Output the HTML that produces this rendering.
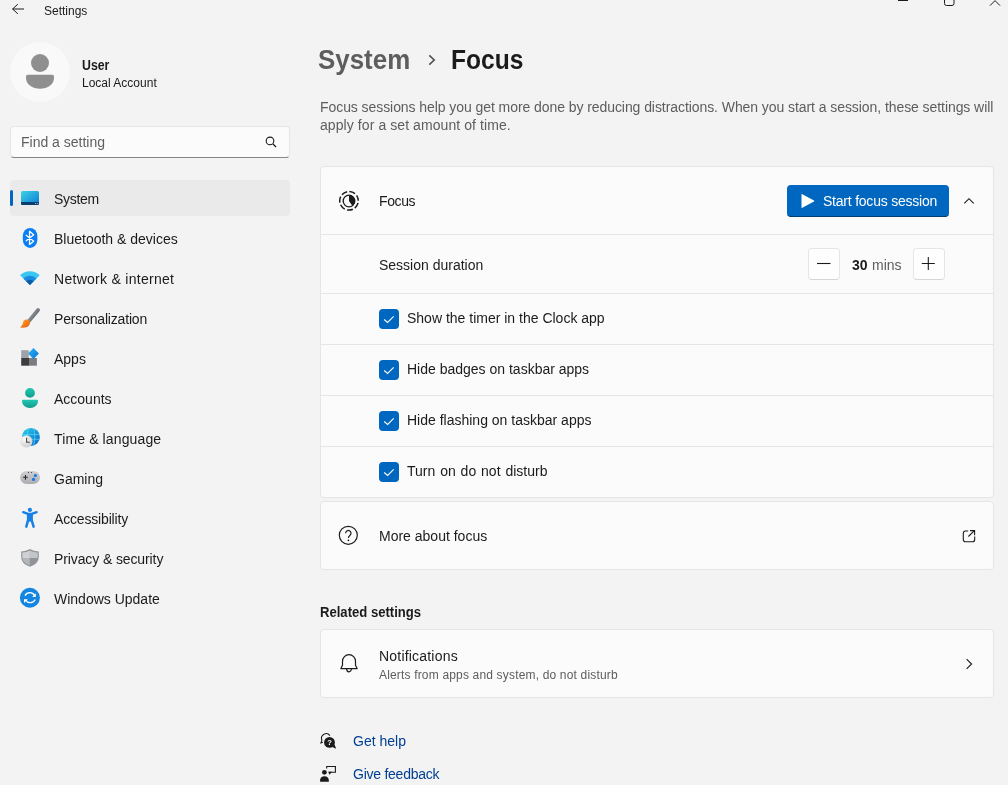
<!DOCTYPE html>
<html><head><meta charset="utf-8">
<style>
*{margin:0;padding:0;box-sizing:border-box}
html,body{width:1008px;height:785px;overflow:hidden;background:#f3f3f3;font-family:"Liberation Sans",sans-serif;color:#1b1b1b}
.a{position:absolute}
.t{position:absolute;white-space:nowrap;line-height:1;font-size:14px}
.card{position:absolute;left:320px;width:674px;background:#fbfbfb;border:1px solid #e5e5e5;border-radius:4px}
.sep{position:absolute;left:321px;width:672px;height:1px;background:#e5e5e5}
.nav{position:absolute;left:54px;font-size:14px;line-height:1;white-space:nowrap}
.ico{position:absolute}
.cb{position:absolute;left:379px;width:20px;height:20px;border-radius:4px;background:#0067c0}
</style></head><body>
<div id="root" style="position:absolute;left:0;top:0;width:1008px;height:785px;will-change:transform;background:#f3f3f3">

<!-- title bar -->
<svg class="a" style="left:0;top:0" width="30" height="20" viewBox="0 0 30 20"><path d="M12.5 9H24M17.8 4.2L12.6 9l5.2 4.8" fill="none" stroke="#1b1b1b" stroke-width="1"/></svg>
<div class="t" style="left:44px;top:5px;font-size:12px">Settings</div>
<svg class="a" style="left:890px;top:0" width="118" height="10" viewBox="0 0 118 10"><path d="M8 0.5H18" stroke="#1b1b1b" stroke-width="1"/><path d="M54.5 -4V3.5a2 2 0 0 0 2 2h5.5a2 2 0 0 0 2-2V-4" fill="none" stroke="#1b1b1b" stroke-width="1"/><path d="M100 5.6L105 0.6L110 5.6" fill="none" stroke="#1b1b1b" stroke-width="1"/></svg>

<!-- user -->
<div class="a" style="left:10px;top:42px;width:60px;height:60px;border-radius:50%;background:#f9f9f9"></div>
<svg class="a" style="left:10px;top:42px" width="60" height="60" viewBox="0 0 60 60"><circle cx="30" cy="21" r="9" fill="#8f8f8f"/><path d="M16 34.6A1.9 1.9 0 0 1 17.9 32.7H42.1A1.9 1.9 0 0 1 44 34.6V36C44 42.5 37.5 46.8 30 46.8S16 42.5 16 36z" fill="#8f8f8f"/></svg>
<div class="t" style="left:82px;top:58px;font-weight:bold;transform:scaleX(0.88);transform-origin:0 0">User</div>
<div class="t" style="left:82px;top:77px;font-size:12px">Local Account</div>

<!-- search -->
<div class="a" style="left:10px;top:126px;width:280px;height:32px;background:#fbfbfb;border:1px solid #e5e5e5;border-bottom:1px solid #868686;border-radius:4px"></div>
<div class="t" style="left:21px;top:135px;color:#5f5f5f">Find a setting</div>
<svg class="a" style="left:262px;top:133px" width="18" height="18" viewBox="0 0 18 18"><circle cx="8" cy="7.9" r="3.8" fill="none" stroke="#1b1b1b" stroke-width="1.1"/><path d="M11 11l3 3" stroke="#1b1b1b" stroke-width="1.2"/></svg>

<!-- nav -->
<div class="a" style="left:10px;top:180px;width:280px;height:36px;border-radius:4px;background:#eaeaea"></div>
<div class="a" style="left:10px;top:190px;width:3px;height:16px;border-radius:2px;background:#0067c0"></div>

<svg class="a" style="left:16px;top:184px" width="28" height="28" viewBox="0 0 28 28">
<defs><linearGradient id="gsys" x1="0" y1="0" x2="1" y2="1"><stop offset="0" stop-color="#3bd4e6"/><stop offset="1" stop-color="#0b78d4"/></linearGradient></defs>
<rect x="5" y="7" width="18" height="14" rx="1.6" fill="url(#gsys)"/>
<path d="M5 18H23V19.4A1.6 1.6 0 0 1 21.4 21H6.6A1.6 1.6 0 0 1 5 19.4z" fill="#0b3d6e"/>
<circle cx="19.6" cy="19.5" r="0.5" fill="#cfe6f5"/><circle cx="21.7" cy="19.5" r="0.5" fill="#cfe6f5"/>
</svg>
<svg class="a" style="left:16px;top:225px" width="28" height="28" viewBox="0 0 28 28">
<rect x="6.8" y="2.9" width="14.6" height="20" rx="7.3" ry="8.2" fill="#0a7ff5"/>
<path d="M10.2 10.3L17.7 16.3L13.55 19.4V6.2L17.7 9.7L10.2 15.7" fill="none" stroke="#fff" stroke-width="1.3" stroke-linejoin="round" stroke-linecap="round"/>
</svg>
<svg class="a" style="left:16px;top:265px" width="28" height="28" viewBox="0 0 28 28">
<path d="M4.1 10.3A14 14 0 0 1 23.7 10.3L13.9 20z" fill="#3ac6f2"/>
<path d="M7.3 13.4A9.5 9.5 0 0 1 20.5 13.4L13.9 20z" fill="#1a8ae0"/>
<path d="M10.2 16.3A5.3 5.3 0 0 1 17.6 16.3L13.9 20z" fill="#0c5aa6"/>
</svg>
<svg class="a" style="left:16px;top:305px" width="28" height="28" viewBox="0 0 28 28">
<defs><linearGradient id="gbr" x1="0" y1="0" x2="1" y2="1"><stop offset="0" stop-color="#ffb21a"/><stop offset="1" stop-color="#e8501a"/></linearGradient>
<linearGradient id="gbh" gradientUnits="userSpaceOnUse" x1="13" y1="8" x2="20" y2="13"><stop offset="0" stop-color="#a3a8ae"/><stop offset="1" stop-color="#5f646b"/></linearGradient></defs>
<path d="M22 5L12.6 16.4" stroke="url(#gbh)" stroke-width="3.8" stroke-linecap="round"/>
<path d="M9.6 14.6Q13.3 14 14 17.3Q14 21 10.3 22.3Q7 23.3 4.2 22.2Q6.6 20.6 6.9 18Q7.2 15.1 9.6 14.6z" fill="url(#gbr)"/>
</svg>
<svg class="a" style="left:16px;top:345px" width="28" height="28" viewBox="0 0 28 28">
<defs><linearGradient id="gap" x1="0" y1="0" x2="1" y2="1"><stop offset="0" stop-color="#28b8f5"/><stop offset="1" stop-color="#0a6fd8"/></linearGradient></defs>
<rect x="5.2" y="5.2" width="7.6" height="7.8" fill="#9ea3aa"/>
<rect x="5.2" y="13" width="7.8" height="7.7" fill="#3d3d3f"/>
<rect x="13" y="13" width="7.9" height="7.7" fill="#7b7c80"/>
<path d="M17.5 3.1L22.9 8.6L17.5 14L12.1 8.6z" fill="url(#gap)"/>
</svg>
<svg class="a" style="left:16px;top:385px" width="28" height="28" viewBox="0 0 28 28">
<defs><linearGradient id="gac" x1="0" y1="0" x2="0" y2="1"><stop offset="0" stop-color="#22c7b4"/><stop offset="1" stop-color="#0f9c8c"/></linearGradient></defs>
<circle cx="14" cy="7.9" r="4.9" fill="url(#gac)"/>
<path d="M6 16A1.2 1.2 0 0 1 7.2 14.8H20.8A1.2 1.2 0 0 1 22 16C22 20 18.5 22.9 14 22.9S6 20 6 16z" fill="url(#gac)"/>
</svg>
<svg class="a" style="left:16px;top:425px" width="28" height="28" viewBox="0 0 28 28">
<defs><linearGradient id="ggl" x1="0" y1="0" x2="1" y2="1"><stop offset="0" stop-color="#2ed0ea"/><stop offset="1" stop-color="#0a63c9"/></linearGradient>
<radialGradient id="gcl" cx="0.35" cy="0.3" r="0.8"><stop offset="0" stop-color="#fafafa"/><stop offset="1" stop-color="#c9c9c9"/></radialGradient></defs>
<circle cx="14.9" cy="11.9" r="9" fill="url(#ggl)"/>
<path d="M6 9.5H23.8M6.5 14.3H23.5M12 3.2Q10.5 12 12.3 20.8M18 3.2Q19.6 12 17.9 20.8" fill="none" stroke="#5fe0f5" stroke-width="0.8" opacity="0.8"/>
<circle cx="10.4" cy="16.4" r="6.1" fill="url(#gcl)"/>
<path d="M10.6 12.8V17.2H13.8" fill="none" stroke="#444" stroke-width="1.1"/>
</svg>
<svg class="a" style="left:16px;top:465px" width="28" height="28" viewBox="0 0 28 28">
<defs><linearGradient id="ggm" x1="0" y1="0" x2="0" y2="1"><stop offset="0" stop-color="#d0d0d3"/><stop offset="1" stop-color="#adadb2"/></linearGradient></defs>
<rect x="4.1" y="5.9" width="19.8" height="13" rx="6.5" fill="url(#ggm)"/>
<path d="M7.1 12.3H11.8M9.45 9.9V14.7" stroke="#2b2b2b" stroke-width="1.1"/>
<circle cx="19.4" cy="10.5" r="1.6" fill="#1479e6"/><circle cx="17.5" cy="14.4" r="1.6" fill="#1479e6"/>
<circle cx="12.5" cy="7.5" r="0.55" fill="#333"/><circle cx="15.5" cy="7.5" r="0.55" fill="#333"/>
</svg>
<svg class="a" style="left:16px;top:505px" width="28" height="28" viewBox="0 0 28 28">
<circle cx="13.9" cy="4.9" r="2.05" fill="#1580e8"/>
<path d="M7.2 7.2L12 8.9H15.8L20.6 7.2" fill="none" stroke="#1580e8" stroke-width="2.3" stroke-linecap="round" stroke-linejoin="round"/>
<rect x="10.9" y="8.8" width="6" height="7.8" fill="#1580e8"/>
<path d="M11.9 15.8L10.3 21.6M15.9 15.8L17.6 21.6" stroke="#1580e8" stroke-width="2.5" stroke-linecap="round"/>
</svg>
<svg class="a" style="left:16px;top:545px" width="28" height="28" viewBox="0 0 28 28">
<defs><clipPath id="csh"><path d="M6.3 7.4Q10.5 7.4 13.9 5.4Q17.3 7.4 21.7 7.4V12Q21.7 18 13.9 20.6Q6.3 18 6.3 12z"/></clipPath></defs>
<path d="M5.2 6.4Q10 6.5 13.9 4.1Q17.8 6.5 22.8 6.4V12Q22.8 18.8 13.9 21.8Q5.2 18.8 5.2 12z" fill="#909398"/>
<g clip-path="url(#csh)"><rect x="0" y="0" width="13.9" height="13" fill="#cfd1d4"/><rect x="13.9" y="0" width="14" height="13" fill="#c3c5c8"/><rect x="0" y="13" width="13.9" height="15" fill="#b3b5b8"/><rect x="13.9" y="13" width="14" height="15" fill="#909398"/></g>
</svg>
<svg class="a" style="left:16px;top:585px" width="28" height="28" viewBox="0 0 28 28">
<circle cx="13.9" cy="12.7" r="10" fill="#1485e0"/>
<path d="M9 10.6A5.4 5.4 0 0 1 18.6 10.6" fill="none" stroke="#fff" stroke-width="1.3"/>
<path d="M19.8 8.2V11.9H16.1z" fill="#fff"/>
<path d="M19.2 14.5A5.5 5.5 0 0 1 9.6 15.2" fill="none" stroke="#fff" stroke-width="1.3"/>
<path d="M8 18V14.3H11.8z" fill="#fff"/>
</svg>

<div class="nav" style="top:192px;letter-spacing:-0.3px">System</div>
<div class="nav" style="top:232px">Bluetooth &amp; devices</div>
<div class="nav" style="top:272px;letter-spacing:0.28px">Network &amp; internet</div>
<div class="nav" style="top:312px;letter-spacing:-0.18px">Personalization</div>
<div class="nav" style="top:352px">Apps</div>
<div class="nav" style="top:392px">Accounts</div>
<div class="nav" style="top:432px;letter-spacing:0.13px">Time &amp; language</div>
<div class="nav" style="top:472px">Gaming</div>
<div class="nav" style="top:512px;letter-spacing:-0.17px">Accessibility</div>
<div class="nav" style="top:552px;letter-spacing:-0.11px">Privacy &amp; security</div>
<div class="nav" style="top:592px">Windows Update</div>

<!-- header -->
<div class="t" style="left:318px;top:47px;font-size:27px;font-weight:bold;transform:scaleX(0.96);transform-origin:0 0;color:#5d5d5d">System</div>
<svg class="a" style="left:424px;top:52px" width="14" height="16" viewBox="0 0 14 16"><path d="M5.3 3.3L10.2 8L5.3 12.7" fill="none" stroke="#505050" stroke-width="1.6"/></svg>
<div class="t" style="left:451px;top:47px;font-size:27px;font-weight:bold;transform:scaleX(0.91);transform-origin:0 0">Focus</div>
<div class="t" style="left:320px;top:100px;color:#5d5d5d;letter-spacing:-0.07px">Focus sessions help you get more done by reducing distractions. When you start a session, these settings will</div>
<div class="t" style="left:320px;top:118px;color:#5d5d5d;letter-spacing:0.08px">apply for a set amount of time.</div>

<!-- card 1 -->
<div class="card" style="top:166px;height:332px"></div>
<div class="sep" style="top:234px"></div>
<div class="sep" style="top:293px"></div>
<div class="sep" style="top:344px"></div>
<div class="sep" style="top:395px"></div>
<div class="sep" style="top:446px"></div>

<div class="t" style="left:379px;top:194px;letter-spacing:-0.4px">Focus</div>
<div class="t" style="left:379px;top:258px">Session duration</div>
<div class="t" style="left:407px;top:311px">Show the timer in the Clock app</div>
<div class="t" style="left:407px;top:362px">Hide badges on taskbar apps</div>
<div class="t" style="left:407px;top:413px">Hide flashing on taskbar apps</div>
<div class="t" style="left:407px;top:464px;word-spacing:1px">Turn on do not disturb</div>

<!-- card 2 -->
<div class="card" style="top:501px;height:69px"></div>
<div class="t" style="left:379px;top:529px">More about focus</div>

<div class="t" style="left:320px;top:605px;font-weight:bold;transform:scaleX(0.935);transform-origin:0 0">Related settings</div>

<!-- card 3 -->
<div class="card" style="top:629px;height:69px"></div>
<div class="t" style="left:379px;top:649px;letter-spacing:0.2px">Notifications</div>
<div class="t" style="left:379px;top:669px;font-size:12px;color:#5d5d5d;letter-spacing:0.17px">Alerts from apps and system, do not disturb</div>

<div class="t" style="left:353px;top:734px;color:#003e92">Get help</div>
<div class="t" style="left:353px;top:767px;color:#003e92;letter-spacing:-0.25px">Give feedback</div>


<!-- card1 widgets -->
<svg class="a" style="left:337px;top:189px" width="24" height="24" viewBox="0 0 24 24">
<circle cx="12" cy="11.8" r="9.3" fill="none" stroke="#1b1b1b" stroke-width="1.5" stroke-dasharray="6.05 2.3" stroke-dashoffset="-2.2"/>
<circle cx="12" cy="12" r="5.8" fill="none" stroke="#1b1b1b" stroke-width="1.3"/>
<path d="M12 6.2V12L15.3 16.8A5.8 5.8 0 0 0 12 6.2z" fill="#1b1b1b"/>
</svg>
<div class="a" style="left:787px;top:185px;width:162px;height:32px;border-radius:4px;background:#0067c0;border-bottom:1px solid #003e73"></div>
<svg class="a" style="left:798px;top:192px" width="20" height="18" viewBox="0 0 20 18"><path d="M3.5 2.6Q3.5 1.8 4.3 2.2L16 8.5Q16.6 9 16 9.5L4.3 15.8Q3.5 16.2 3.5 15.4z" fill="#fff"/></svg>
<div class="t" style="left:823px;top:194px;color:#fff;letter-spacing:-0.22px">Start focus session</div>
<svg class="a" style="left:960px;top:193px" width="18" height="14" viewBox="0 0 18 14"><path d="M4.3 10.4L9 5.7L13.7 10.4" fill="none" stroke="#1b1b1b" stroke-width="1.1"/></svg>

<div class="a" style="left:808px;top:248px;width:32px;height:32px;border-radius:4px;background:#fefefe;border:1px solid #e5e5e5;border-bottom-color:#d5d5d5"></div>
<svg class="a" style="left:808px;top:248px" width="32" height="32" viewBox="0 0 32 32"><path d="M9 15.5H22.5" stroke="#1b1b1b" stroke-width="1.1"/></svg>
<div class="t" style="left:852px;top:258px;font-weight:bold">30</div>
<div class="t" style="left:872px;top:258px;color:#5d5d5d">mins</div>
<div class="a" style="left:913px;top:248px;width:32px;height:32px;border-radius:4px;background:#fefefe;border:1px solid #e5e5e5;border-bottom-color:#d5d5d5"></div>
<svg class="a" style="left:913px;top:248px" width="32" height="32" viewBox="0 0 32 32"><path d="M8.8 15.5H21.8M15.3 9V22" stroke="#1b1b1b" stroke-width="1.1"/></svg>

<div class="cb" style="top:309px"></div>
<div class="cb" style="top:360px"></div>
<div class="cb" style="top:411px"></div>
<div class="cb" style="top:462px"></div>
<svg class="a" style="left:379px;top:309px" width="20" height="20" viewBox="0 0 20 20"><path d="M5.2 10.5L8.6 13.5L14.7 7.4" fill="none" stroke="#fff" stroke-width="1.1"/></svg>
<svg class="a" style="left:379px;top:360px" width="20" height="20" viewBox="0 0 20 20"><path d="M5.2 10.5L8.6 13.5L14.7 7.4" fill="none" stroke="#fff" stroke-width="1.1"/></svg>
<svg class="a" style="left:379px;top:411px" width="20" height="20" viewBox="0 0 20 20"><path d="M5.2 10.5L8.6 13.5L14.7 7.4" fill="none" stroke="#fff" stroke-width="1.1"/></svg>
<svg class="a" style="left:379px;top:462px" width="20" height="20" viewBox="0 0 20 20"><path d="M5.2 10.5L8.6 13.5L14.7 7.4" fill="none" stroke="#fff" stroke-width="1.1"/></svg>

<!-- card2 icons -->
<svg class="a" style="left:336px;top:523px" width="24" height="24" viewBox="0 0 24 24"><circle cx="12.3" cy="12.3" r="9" fill="none" stroke="#1b1b1b" stroke-width="1.2"/><path d="M9.6 10.2a2.7 2.7 0 1 1 4.4 2.1c-1 .8-1.6 1.2-1.6 2.6" fill="none" stroke="#1b1b1b" stroke-width="1.2"/><circle cx="12.4" cy="17.3" r="0.9" fill="#1b1b1b"/></svg>
<svg class="a" style="left:960px;top:527px" width="18" height="18" viewBox="0 0 18 18"><path d="M8.2 4H5.5A2.3 2.3 0 0 0 3.3 6.3v6.1a2.3 2.3 0 0 0 2.2 2.3h6.9a2.3 2.3 0 0 0 2.3-2.3V9.5" fill="none" stroke="#1b1b1b" stroke-width="1.1"/><path d="M8.4 9.5L14.4 3.6M10 3.6H14.6V8.2" fill="none" stroke="#1b1b1b" stroke-width="1.1"/></svg>

<!-- card3 icons -->
<svg class="a" style="left:336px;top:650px" width="26" height="26" viewBox="0 0 26 26"><path d="M4.9 18.6L6.5 15.2V11.2A6.5 6.5 0 0 1 19.5 11.2V15.2L21.1 18.6z" fill="none" stroke="#1b1b1b" stroke-width="1.2" stroke-linejoin="round"/><path d="M10.6 18.8A2.4 3 0 0 0 15.4 18.8" fill="none" stroke="#1b1b1b" stroke-width="1.2"/></svg>
<svg class="a" style="left:960px;top:655px" width="18" height="18" viewBox="0 0 18 18"><path d="M6.6 4.1L11.6 9L6.6 13.9" fill="none" stroke="#1b1b1b" stroke-width="1.1"/></svg>

<!-- help icons -->
<svg class="a" style="left:318px;top:731px" width="22" height="20" viewBox="0 0 22 20"><path d="M11.9 4.6A4.6 4.6 0 0 0 3.8 8.8L3.6 10.8" fill="none" stroke="#1b1b1b" stroke-width="1.1"/><path d="M1.9 12.8L3.1 9.9L5.3 11.7z" fill="#1b1b1b"/><circle cx="11.5" cy="11.4" r="5.4" fill="#1b1b1b"/><path d="M14.2 15.9L18.1 17.8L16.6 13.5z" fill="#1b1b1b"/><text x="11.5" y="14.4" font-size="7.6" font-weight="bold" fill="#fff" text-anchor="middle" font-family="Liberation Sans">?</text></svg>
<svg class="a" style="left:318px;top:764px" width="22" height="20" viewBox="0 0 22 20"><circle cx="6.4" cy="8.3" r="2.4" fill="#1b1b1b"/><path d="M2.1 17.8V16.2C2.1 13.9 4 12.3 6.45 12.3S10.8 13.9 10.8 16.2V17.8z" fill="#1b1b1b"/><path d="M8.7 4.6V2.5H17.4V8.3H10.8" fill="none" stroke="#1b1b1b" stroke-width="1.1"/><path d="M10.2 7.8H14L11.6 10.8z" fill="#1b1b1b"/></svg>
</div>
</body></html>
